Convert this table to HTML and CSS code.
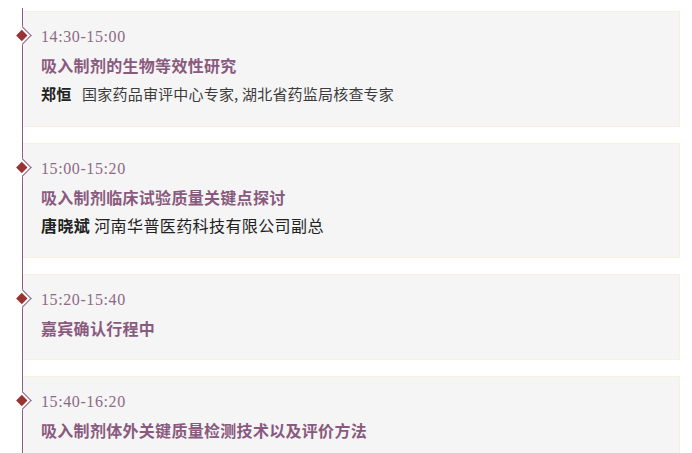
FILE: index.html
```html
<!DOCTYPE html>
<html lang="zh-CN">
<head>
    <meta charset="UTF-8">
    <meta name="viewport" content="width=device-width, initial-scale=1.0">
    <title>会议日程</title>
    <link rel="stylesheet" href="styles.css">
</head>
<body>
    <div class="timeline">
        <div class="session">
            <span class="marker"><i></i></span>
            <div class="time">14:30-15:00</div>
            <div class="title">吸入制剂的生物等效性研究</div>
            <div class="speaker speaker-small"><b>郑恒</b>&nbsp;&nbsp; 国家药品审评中心专家, 湖北省药监局核查专家</div>
        </div>

        <div class="session">
            <span class="marker"><i></i></span>
            <div class="time">15:00-15:20</div>
            <div class="title">吸入制剂临床试验质量关键点探讨</div>
            <div class="speaker"><b>唐晓斌</b> 河南华普医药科技有限公司副总</div>
        </div>

        <div class="session">
            <span class="marker"><i></i></span>
            <div class="time">15:20-15:40</div>
            <div class="title">嘉宾确认行程中</div>
        </div>

        <div class="session">
            <span class="marker"><i></i></span>
            <div class="time">15:40-16:20</div>
            <div class="title">吸入制剂体外关键质量检测技术以及评价方法</div>
        </div>
    </div>
</body>
</html>
```

FILE: styles.css
```css
body {
    margin: 0;
    background: #fff;
    font-family: "Noto Sans CJK SC", "Noto Sans", sans-serif;
}
.timeline {
    margin: 8px 12px 0 22px;
    padding-top: 3px;
    border-left: 1px solid #8e5f82;
    min-height: 460px;
}
.session {
    position: relative;
    background: #f5f5f5;
    border: 1px solid #f8efdf;
    border-left: none;
    padding: 14px 18px 20px 18px;
    margin-bottom: 16px;
}
.marker {
    position: absolute;
    left: -7px;
    top: 17px;
    width: 12px;
    height: 12px;
    background: #fff;
    border-top: 1px solid #8e5f82;
    border-right: 1px solid #8e5f82;
    transform: rotate(45deg);
}
.marker i {
    position: absolute;
    left: 2px;
    top: 2px;
    width: 8px;
    height: 8px;
    background: #993333;
}
.time {
    font-family: "Liberation Serif", serif;
    font-size: 16px;
    line-height: 22px;
    letter-spacing: 0.6px;
    color: #8c6a86;
}
.title {
    margin-top: 6px;
    font-size: 16px;
    line-height: 22px;
    font-weight: bold;
    letter-spacing: 0.3px;
    color: #8a5a7e;
}
.speaker {
    margin-top: 5px;
    font-size: 16px;
    line-height: 24px;
    letter-spacing: 0.4px;
    color: #222;
}
.speaker-small {
    font-size: 15px;
    line-height: 25px;
    letter-spacing: 0.2px;
    color: #3c3c3c;
}
.speaker b {
    color: #222;
}
```
